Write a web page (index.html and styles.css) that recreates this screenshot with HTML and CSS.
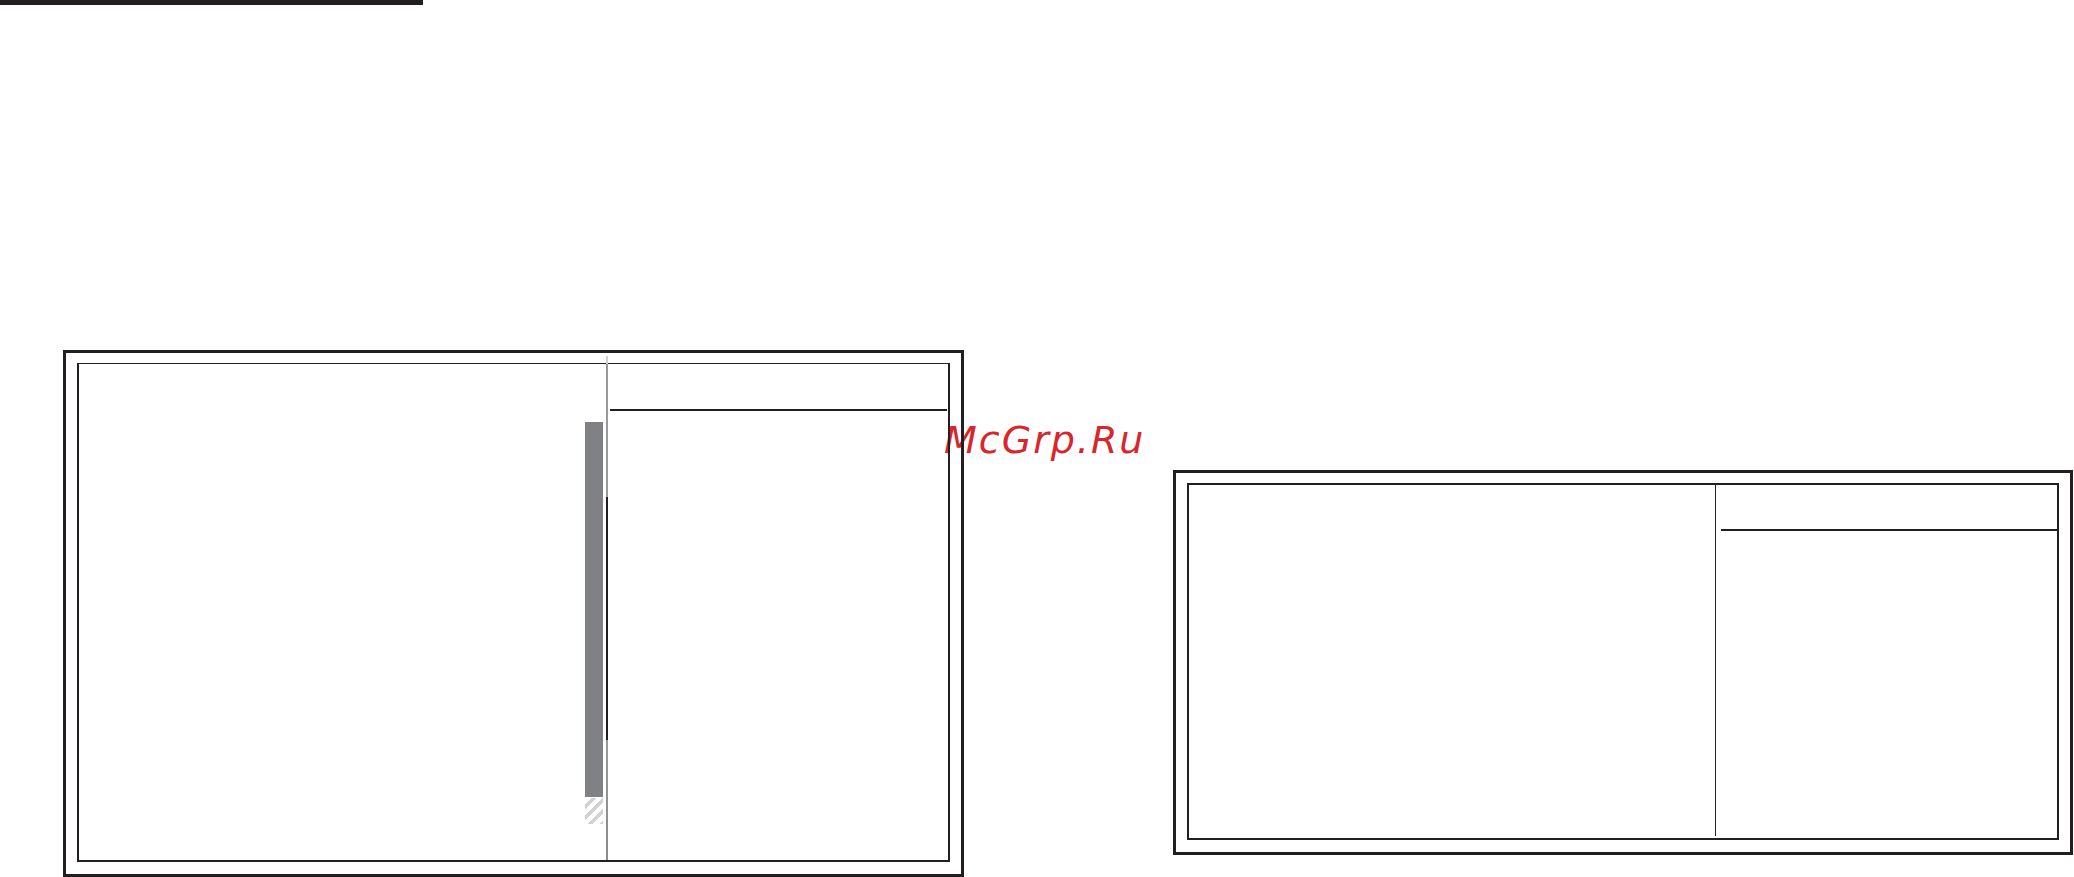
FILE: index.html
```html
<!DOCTYPE html>
<html lang="ru">
<head>
<meta charset="utf-8">
<title>McGrp.Ru</title>
<link rel="stylesheet" href="styles.css">
</head>
<body>
  <div class="rule-top"></div>

  <main class="sheets">
    <section class="frame frame-left">
      <div class="panel panel-left">
        <div class="pane-main pane-main-left">
          <div class="scroll-track"></div>
          <div class="scroll-tail"></div>
        </div>
        <div class="divider divider-left"></div>
        <div class="pane-side pane-side-left">
          <div class="side-rule"></div>
        </div>
      </div>
    </section>

    <section class="frame frame-right">
      <div class="panel panel-right">
        <div class="pane-main pane-main-right"></div>
        <div class="divider divider-right"></div>
        <div class="pane-side pane-side-right">
          <div class="side-rule side-rule-right"></div>
        </div>
      </div>
    </section>
  </main>

  <div class="watermark">McGrp.Ru</div>
</body>
</html>
```

FILE: styles.css
```css
html {
  background: #ffffff;
}

body {
  margin: 0;
  padding: 0;
  width: 2074px;
  height: 877px;
  overflow: hidden;
  font-family: "DejaVu Sans", "Liberation Sans", sans-serif;
  position: relative;
}

/* heavy rule across the top left */
.rule-top {
  width: 423px;
  height: 5px;
  background: #231f20;
}

/* row holding the two framed sheets */
.sheets {
  display: flex;
  align-items: flex-start;
  gap: 209px;
  margin-top: 345px;
  padding-left: 63px;
}

.frame {
  box-sizing: border-box;
  border: 3px solid #231f20;
  padding: 10px 11px 12px 11px;
}

.frame-left {
  width: 901px;
  height: 527px;
}

.frame-right {
  width: 900px;
  height: 385px;
  margin-top: 120px;
}

.panel {
  box-sizing: border-box;
  display: flex;
  height: 100%;
  border: 2px solid #231f20;
}

.panel-left {
  border-top-width: 1px;
}

/* left panel */
.pane-main-left {
  width: 527px;
  display: flex;
  flex-direction: column;
  align-items: flex-end;
  padding-top: 58px;
  padding-right: 3px;
  box-sizing: border-box;
}

.scroll-track {
  width: 18px;
  height: 375px;
  background: #808184;
}

.scroll-tail {
  width: 18px;
  height: 26px;
  margin-top: 1px;
  background: repeating-linear-gradient(135deg,
    #ffffff 0px, #ffffff 4.5px,
    #d2d2d2 4.5px, #d2d2d2 8px);
}

.divider-left {
  width: 2px;
  margin-top: -8px;
  background: linear-gradient(to bottom,
    #d0d0d0 0px, #d0d0d0 8px,
    #9a9a9a 8px, #9a9a9a 141px,
    #231f20 141px, #231f20 384px,
    #9a9a9a 384px, #8a8a8a 100%);
}

.pane-side-left {
  width: 340px;
  padding-top: 45px;
  box-sizing: border-box;
}

.side-rule {
  height: 2px;
  margin-left: 2px;
  margin-right: 1px;
  background: #231f20;
}

/* right panel */
.pane-main-right {
  width: 526px;
}

.divider-right {
  width: 1px;
  margin-bottom: 2px;
  background: #231f20;
}

.pane-side-right {
  width: 341px;
  padding-top: 44px;
  box-sizing: border-box;
}

.side-rule-right {
  margin-left: 5px;
  margin-right: 0;
}

/* site mark laid over the page, under the frame lines */
.watermark {
  position: absolute;
  left: 944px;
  top: 421px;
  z-index: -1;
  font-family: "DejaVu Sans", sans-serif;
  font-style: oblique;
  font-size: 38px;
  letter-spacing: 2px;
  line-height: 1;
  color: #d9252b;
  white-space: nowrap;
}
```
